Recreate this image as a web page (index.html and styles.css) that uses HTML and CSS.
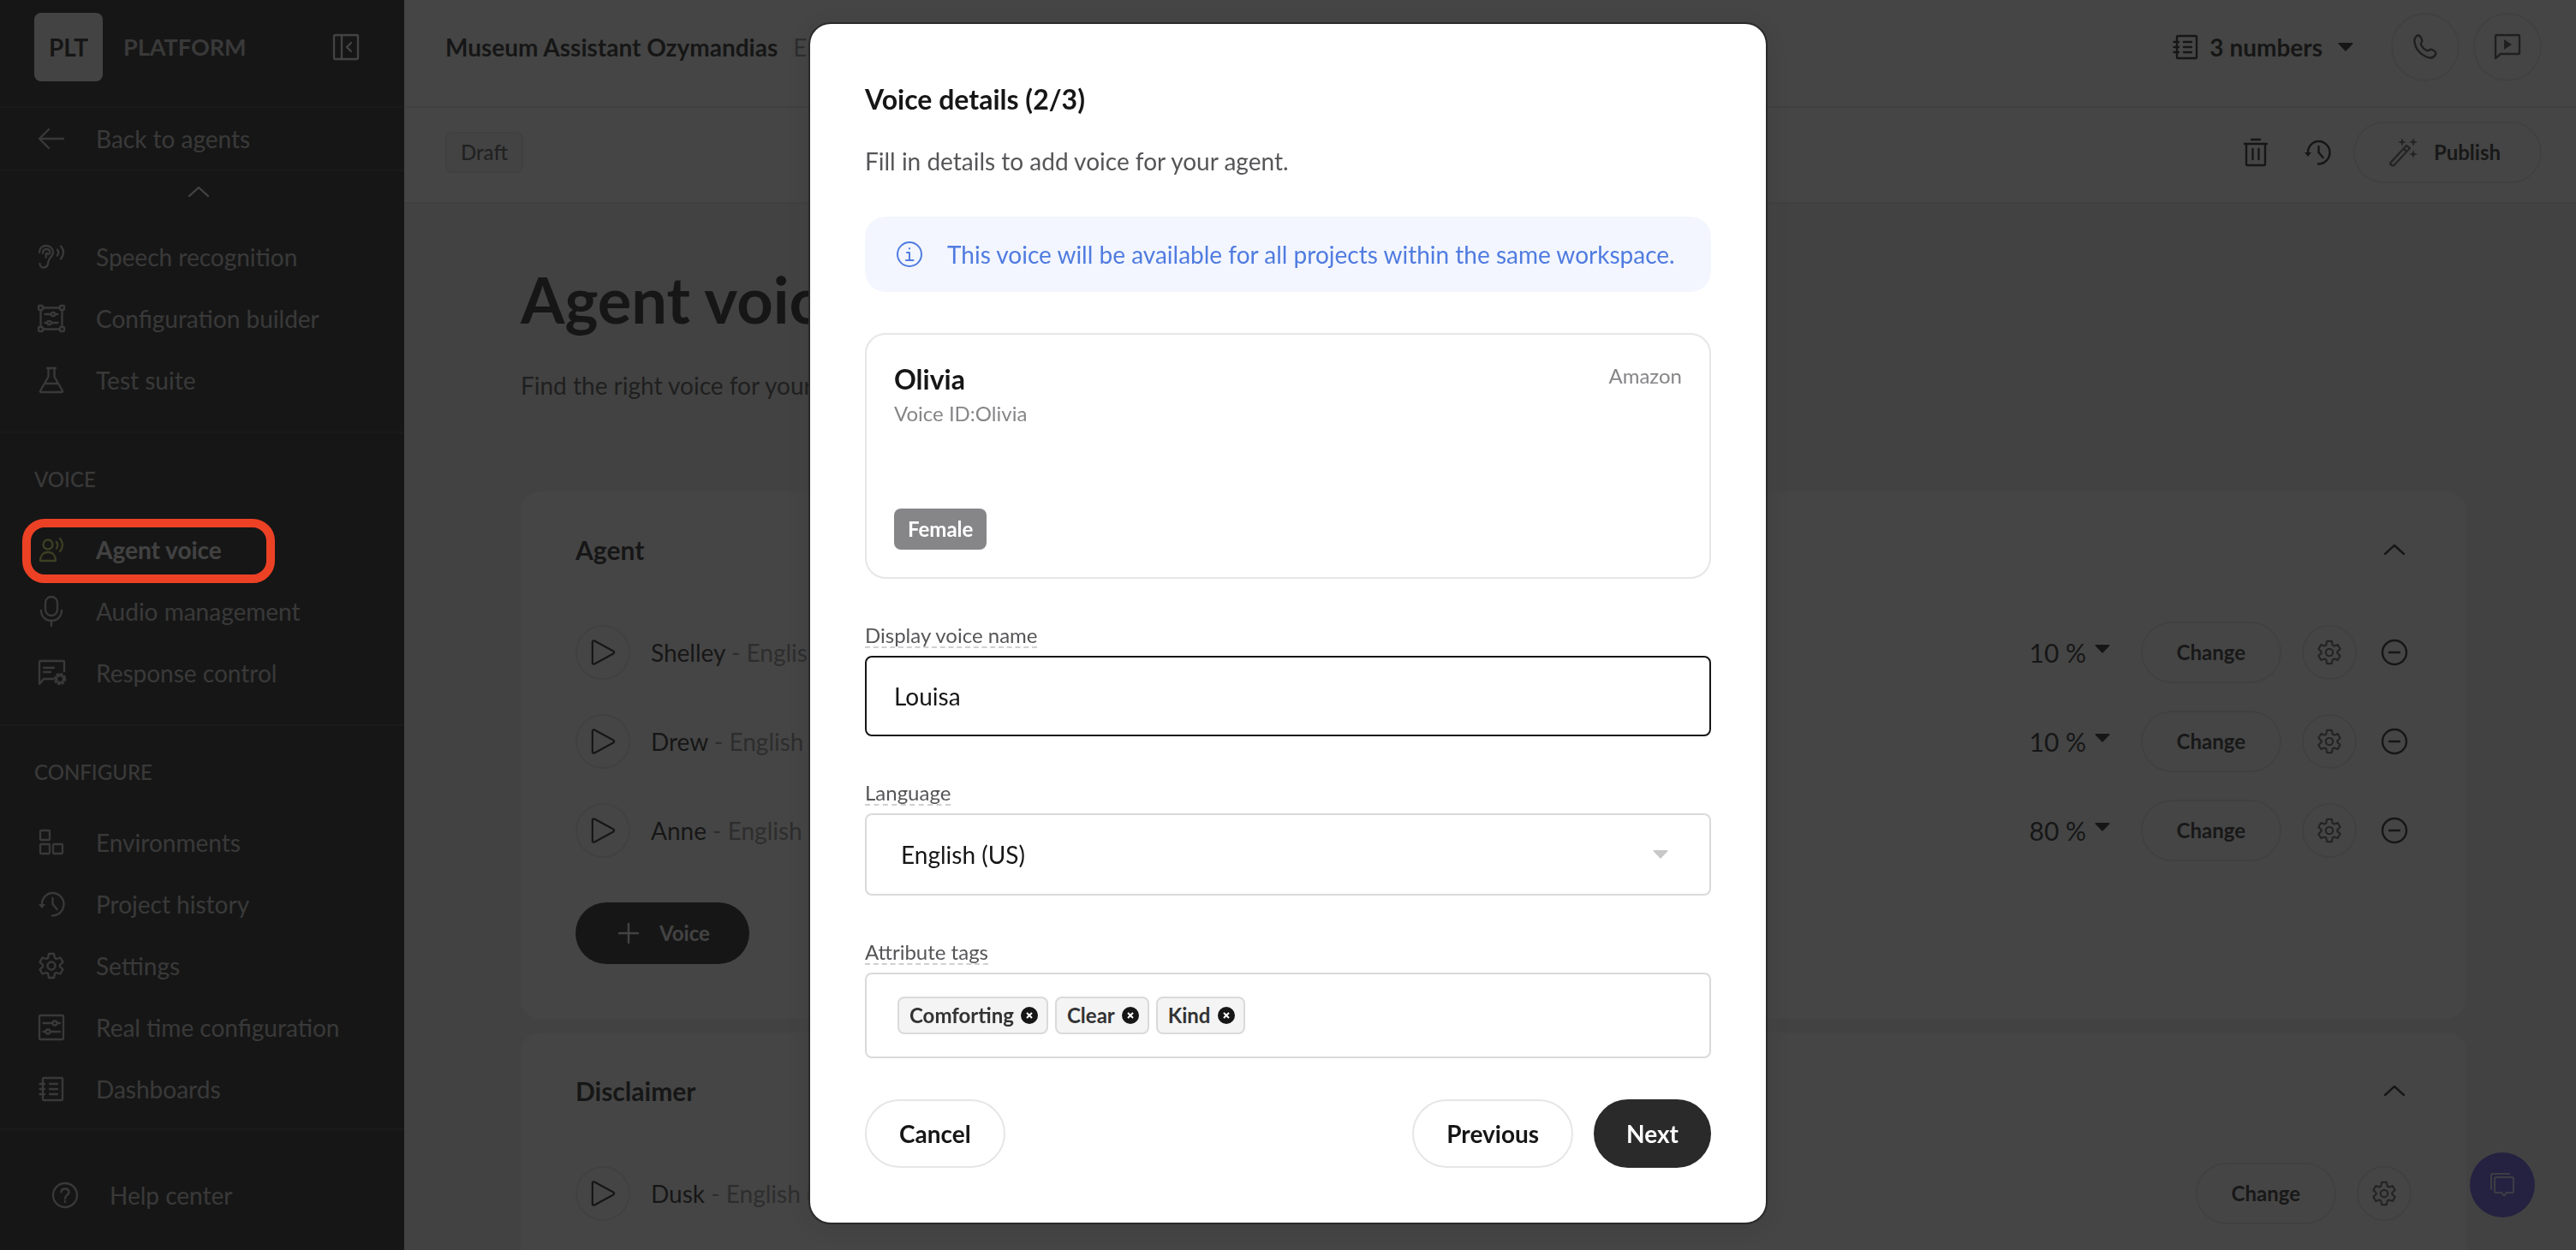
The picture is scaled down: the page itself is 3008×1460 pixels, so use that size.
FILE: index.html
```html
<!DOCTYPE html>
<html lang="en">
<head>
<meta charset="utf-8">
<title>Agent voice</title>
<link rel="stylesheet" href="styles.css">
</head>
<body>
<svg class="sprite" aria-hidden="true">
  <symbol id="i-collapse" viewBox="0 0 32 32"><rect x="2" y="2" width="28" height="28" rx="1"/><path d="M11 2v28M22 11l-5 5 5 5"/></symbol>
  <symbol id="i-back" viewBox="0 0 32 32"><path d="M30 16H2M13 5L2 16l11 11"/></symbol>
  <symbol id="i-up" viewBox="0 0 32 32"><path d="M5 21l11-10 11 10"/></symbol>
  <symbol id="i-ear" viewBox="0 0 32 32"><path d="M2 11C2 6 5.500 3 10 3s8 3.500 8 7.500c0 5-5 6.500-5.500 11-.4 4-2.200 7-5.500 7-2.800 0-4.500-2-4.500-4.500M6 12c0-3 1.500-5 4.200-5s4 1.800 4 4-2 2-3.200 1.400M9.500 16.500c.6-2-.6-3.500 1-5"/><path d="M23 7.500c1.500 2 1.500 4.500 0 7M27 3.500c4 4 4 10.500 0 15"/></symbol>
  <symbol id="i-builder" viewBox="0 0 32 32"><path d="M6.500 4h19M6.500 29h19M4 6.500v19M29 6.500v19M9 11.500h6.500M20.500 11.500H24M9 21.500h2.500M16.500 21.500H24" transform="translate(-.5 -.5)"/><rect x="1" y="1" width="5" height="5" rx="1"/><rect x="26" y="1" width="5" height="5" rx="1"/><rect x="1" y="26" width="5" height="5" rx="1"/><rect x="26" y="26" width="5" height="5" rx="1"/><circle cx="18" cy="11" r="2.200"/><circle cx="13.500" cy="21" r="2.200"/></symbol>
  <symbol id="i-flask" viewBox="0 0 32 32"><path d="M11 2h10M12.500 2v10L3 28.500c-.5 1 0 1.500 1 1.500h24c1 0 1.500-.5 1-1.500L19.500 12V2M8 20h16"/></symbol>
  <symbol id="i-agent" viewBox="0 0 32 32"><circle cx="12" cy="10" r="5.500"/><path d="M3 29c0-6 3.500-10 9-10s9 4 9 10zM22 7c1.600 2.300 1.600 5 0 7.500M26 3c4 4.500 4 10.500 0 15"/></symbol>
  <symbol id="i-mic" viewBox="0 0 32 32"><rect x="9" y="-1" width="14" height="22" rx="7"/><path d="M4 15c0 7 5 12 12 12s12-5 12-12M16 27v6"/></symbol>
  <symbol id="i-response" viewBox="0 0 32 32"><path d="M31 14V3c0-.6-.4-1-1-1H3c-.6 0-1 .4-1 1v26l5-6h11M7 10h12M7 15h8"/><circle cx="26" cy="23" r="4"/><circle cx="26" cy="23" r="6" stroke-dasharray="1.800 2.910"/></symbol>
  <symbol id="i-env" viewBox="0 0 32 32"><rect x="3" y="2" width="11" height="11" rx="1"/><rect x="3" y="18" width="11" height="11" rx="1"/><rect x="18" y="18" width="11" height="11" rx="1"/></symbol>
  <symbol id="i-history" viewBox="0 0 32 32"><path d="M5 17V16C5 9 10.500 3 17.500 3S30.500 9 30.500 16 25 29.500 17 29.500M17.500 9v7l5 6"/><path class="solid" d="M1 16h8l-4 5z"/></symbol>
  <symbol id="i-gear" viewBox="0 0 32 32"><path d="M12 6.900L13 2h6l1 4.900 2 1.100 4.400-1.500 3.100 5.200L26 15v2l3.500 3.300-3.100 5.200L22 24l-2 1.100L19 30h-6l-1-4.900L10 24l-4.400 1.500-3.100-5.200L6 17v-2l-3.500-3.300 3.100-5.200L10 8z"/><circle cx="16" cy="16" r="4.500"/></symbol>
  <symbol id="i-sliders" viewBox="0 0 32 32"><rect x="2" y="2" width="28" height="28" rx="1"/><path d="M6.500 11H17M22.500 11H26M6.500 21H9.500M15 21H26"/><circle cx="20" cy="11" r="2.500"/><circle cx="12" cy="21" r="2.500"/></symbol>
  <symbol id="i-book" viewBox="0 0 32 32"><rect x="6" y="3" width="23" height="26" rx="1"/><path d="M2.500 10H8M2.500 16H8M2.500 22H8M14 10h9M14 16h9M14 22h9"/></symbol>
  <symbol id="i-help" viewBox="0 0 32 32"><circle cx="16" cy="16" r="14"/><path d="M11.500 12.500C11.500 10 13.500 8.500 16 8.500s4.500 1.500 4.500 4c0 3.500-4.500 3-4.500 7.500M16 23v1"/></symbol>
  <symbol id="i-phone" viewBox="0 0 32 32"><path d="M6 3c3-2 4 0 6 4 1.500 3-2 3.500-1 6 1.500 3.500 4 6 7 7 2.500 1 3-2.500 6-1 4 2 5.500 3.500 3.500 6.500-2 3-6 4-11 1.500C9 24 4.500 17 3.500 10.500 3 7 3.500 5 6 3z"/></symbol>
  <symbol id="i-demo" viewBox="0 0 32 32"><path d="M2 29V3c0-.6.4-1 1-1h26c.6 0 1 .4 1 1v20c0 .6-.4 1-1 1H8z"/><path class="solid" d="M12 7l9 6-9 6z"/></symbol>
  <symbol id="i-trash" viewBox="0 0 32 32"><path d="M11 1h10M3 6h26M5 6v24c0 .6.4 1 1 1h20c.6 0 1-.4 1-1V6M12.500 12v12M19.500 12v12"/></symbol>
  <symbol id="i-wand" viewBox="0 0 32 32"><path d="M1.500 28L20 8l4 3L5.500 31C4 32 0 30 1.500 28zM17 12l3.500 3"/><path class="spark" d="M15-1l1.300 3.700L20 4l-3.700 1.300L15 9l-1.300-3.700L10 4l3.700-1.300zM28-1l1.300 3.700L33 4l-3.700 1.300L28 9l-1.300-3.700L23 4l3.700-1.300zM28 13l1.300 3.700L33 18l-3.700 1.300L28 23l-1.300-3.700L23 18l3.700-1.300z"/></symbol>
  <symbol id="i-play" viewBox="0 0 32 32"><path d="M3 3c0-1.500 1.200-2 2.500-1.300L29 14.500c1.400.8 1.400 2.200 0 3L5.500 30.300C4.200 31 3 30.500 3 29z"/></symbol>
  <symbol id="i-plus" viewBox="0 0 32 32"><path d="M16 5v22M5 16h22"/></symbol>
  <symbol id="i-minus" viewBox="0 0 32 32"><circle cx="16" cy="16" r="14"/><path d="M10 16h12"/></symbol>
  <symbol id="i-info" viewBox="0 0 32 32"><circle cx="16" cy="16" r="14"/><path d="M13 14h3v9M12 23h8.500M16 9v.5"/></symbol>
  <symbol id="i-caret" viewBox="0 0 18 10"><path class="solid" d="M1.500 0h15c1 0 1.400.8.7 1.500L9 10 .8 1.500C.1.800.5 0 1.500 0z"/></symbol>
  <symbol id="i-x" viewBox="0 0 20 20"><circle class="solid" cx="10" cy="10" r="10"/><path class="cross" d="M7 7l6 6M13 7l-6 6"/></symbol>
  <symbol id="i-chat" viewBox="0 0 32 32"><path d="M7 8.500C7 7.500 7.500 7 8.500 7h19c1 0 1.500.5 1.500 1.500v15c0 1-.5 1.500-1.500 1.500H21l-3 3.500-3-3.500H8.500C7.500 25 7 24.500 7 23.500z"/><path d="M3 21V4.500C3 3.500 3.500 3 4.500 3H24"/></symbol>
</svg>

<div class="app">
  <aside class="sidebar">
    <div class="brand">
      <span class="brand-mark">PLT</span>
      <span class="brand-name">PLATFORM</span>
      <button class="icon-btn" type="button" aria-label="Collapse sidebar"><svg class="icon light"><use href="#i-collapse"/></svg></button>
    </div>
    <a class="nav-item back" href="#"><svg class="icon"><use href="#i-back"/></svg>Back to agents</a>
    <nav class="nav">
      <button class="nav-scroll" type="button" aria-label="Scroll up"><svg class="icon light"><use href="#i-up"/></svg></button>
      <div class="nav-group">
        <a class="nav-item" href="#"><svg class="icon"><use href="#i-ear"/></svg>Speech recognition</a>
        <a class="nav-item" href="#"><svg class="icon"><use href="#i-builder"/></svg>Configuration builder</a>
        <a class="nav-item" href="#"><svg class="icon"><use href="#i-flask"/></svg>Test suite</a>
      </div>
      <div class="nav-group">
        <h2 class="nav-title">VOICE</h2>
        <a class="nav-item active" href="#" aria-current="page"><svg class="icon"><use href="#i-agent"/></svg>Agent voice</a>
        <a class="nav-item" href="#"><svg class="icon"><use href="#i-mic"/></svg>Audio management</a>
        <a class="nav-item" href="#"><svg class="icon"><use href="#i-response"/></svg>Response control</a>
      </div>
      <div class="nav-group">
        <h2 class="nav-title">CONFIGURE</h2>
        <a class="nav-item" href="#"><svg class="icon"><use href="#i-env"/></svg>Environments</a>
        <a class="nav-item" href="#"><svg class="icon"><use href="#i-history"/></svg>Project history</a>
        <a class="nav-item" href="#"><svg class="icon"><use href="#i-gear"/></svg>Settings</a>
        <a class="nav-item" href="#"><svg class="icon"><use href="#i-sliders"/></svg>Real time configuration</a>
        <a class="nav-item" href="#"><svg class="icon"><use href="#i-book"/></svg>Dashboards</a>
      </div>
    </nav>
    <div class="sidebar-foot">
      <a class="nav-item help" href="#"><svg class="icon"><use href="#i-help"/></svg>Help center</a>
    </div>
  </aside>

  <main class="main">
    <header class="topbar">
      <strong class="agent-name">Museum Assistant Ozymandias</strong>
      <span class="agent-lang">English (US)</span>
      <div class="top-actions">
        <button class="numbers" type="button"><svg class="icon"><use href="#i-book"/></svg>3 numbers<svg class="caret"><use href="#i-caret"/></svg></button>
        <button class="round large" type="button" aria-label="Call"><svg class="icon"><use href="#i-phone"/></svg></button>
        <button class="round large" type="button" aria-label="Demo"><svg class="icon"><use href="#i-demo"/></svg></button>
      </div>
    </header>
    <div class="subbar">
      <span class="draft">Draft</span>
      <div class="sub-actions">
        <div class="tools">
          <button class="icon-btn" type="button" aria-label="Delete"><svg class="icon"><use href="#i-trash"/></svg></button>
          <button class="icon-btn" type="button" aria-label="History"><svg class="icon"><use href="#i-history"/></svg></button>
        </div>
        <button class="pill publish" type="button"><svg class="icon"><use href="#i-wand"/></svg>Publish</button>
      </div>
    </div>
    <div class="content">
      <h1 class="page-title">Agent voice</h1>
      <p class="page-text">Find the right voice for your agent</p>
      <div class="cards">
        <section class="card">
          <div class="card-head"><h2>Agent</h2><button class="icon-btn" type="button" aria-label="Collapse"><svg class="icon"><use href="#i-up"/></svg></button></div>
          <div class="voice-row">
            <button class="round" type="button" aria-label="Play Shelley"><svg class="icon"><use href="#i-play"/></svg></button>
            <p class="voice-name">Shelley <span>- English (US)</span></p>
            <div class="row-actions">
              <div class="percent"><select aria-label="Shelley share"><option>10 %</option></select><svg class="caret"><use href="#i-caret"/></svg></div>
              <button class="pill" type="button">Change</button>
              <button class="round gear" type="button" aria-label="Voice settings"><svg class="icon"><use href="#i-gear"/></svg></button>
              <button class="icon-btn" type="button" aria-label="Remove"><svg class="icon"><use href="#i-minus"/></svg></button>
            </div>
          </div>
          <div class="voice-row">
            <button class="round" type="button" aria-label="Play Drew"><svg class="icon"><use href="#i-play"/></svg></button>
            <p class="voice-name">Drew <span>- English (US)</span></p>
            <div class="row-actions">
              <div class="percent"><select aria-label="Drew share"><option>10 %</option></select><svg class="caret"><use href="#i-caret"/></svg></div>
              <button class="pill" type="button">Change</button>
              <button class="round gear" type="button" aria-label="Voice settings"><svg class="icon"><use href="#i-gear"/></svg></button>
              <button class="icon-btn" type="button" aria-label="Remove"><svg class="icon"><use href="#i-minus"/></svg></button>
            </div>
          </div>
          <div class="voice-row">
            <button class="round" type="button" aria-label="Play Anne"><svg class="icon"><use href="#i-play"/></svg></button>
            <p class="voice-name">Anne <span>- English (US)</span></p>
            <div class="row-actions">
              <div class="percent"><select aria-label="Anne share"><option>80 %</option></select><svg class="caret"><use href="#i-caret"/></svg></div>
              <button class="pill" type="button">Change</button>
              <button class="round gear" type="button" aria-label="Voice settings"><svg class="icon"><use href="#i-gear"/></svg></button>
              <button class="icon-btn" type="button" aria-label="Remove"><svg class="icon"><use href="#i-minus"/></svg></button>
            </div>
          </div>
          <button class="pill add-voice" type="button"><svg class="icon"><use href="#i-plus"/></svg>Voice</button>
        </section>
        <section class="card">
          <div class="card-head"><h2>Disclaimer</h2><button class="icon-btn" type="button" aria-label="Collapse"><svg class="icon"><use href="#i-up"/></svg></button></div>
          <div class="voice-row">
            <button class="round" type="button" aria-label="Play Dusk"><svg class="icon"><use href="#i-play"/></svg></button>
            <p class="voice-name">Dusk <span>- English (US)</span></p>
            <div class="row-actions">
              <button class="pill" type="button">Change</button>
              <button class="round gear" type="button" aria-label="Voice settings"><svg class="icon"><use href="#i-gear"/></svg></button>
            </div>
          </div>
        </section>
      </div>
    </div>
  </main>
</div>

<button class="chat-launcher" type="button" aria-label="Open chat"><svg class="icon"><use href="#i-chat"/></svg></button>

<div class="backdrop">
  <form class="modal" role="dialog" aria-modal="true" aria-labelledby="modal-title">
    <h2 class="modal-title" id="modal-title">Voice details (2/3)</h2>
    <p class="modal-text">Fill in details to add voice for your agent.</p>
    <p class="notice"><svg class="icon"><use href="#i-info"/></svg>This voice will be available for all projects within the same workspace.</p>
    <div class="voice-card">
      <div class="voice-card-head">
        <h3>Olivia</h3>
        <span class="provider">Amazon</span>
      </div>
      <p class="voice-id">Voice ID:Olivia</p>
      <span class="badge">Female</span>
    </div>
    <div class="field">
      <label for="voice-name">Display voice name</label>
      <input class="text-input" id="voice-name" type="text" value="Louisa">
    </div>
    <div class="field">
      <label for="language">Language</label>
      <div class="select-box">
        <select id="language"><option>English (US)</option></select>
        <svg class="caret"><use href="#i-caret"/></svg>
      </div>
    </div>
    <div class="field">
      <label for="tags">Attribute tags</label>
      <div class="tag-box">
        <span class="tag">Comforting<button type="button" aria-label="Remove Comforting"><svg><use href="#i-x"/></svg></button></span>
        <span class="tag">Clear<button type="button" aria-label="Remove Clear"><svg><use href="#i-x"/></svg></button></span>
        <span class="tag">Kind<button type="button" aria-label="Remove Kind"><svg><use href="#i-x"/></svg></button></span>
        <input id="tags" type="text">
      </div>
    </div>
    <div class="modal-actions">
      <button class="btn" type="button">Cancel</button>
      <button class="btn push" type="button">Previous</button>
      <button class="btn primary" type="submit">Next</button>
    </div>
  </form>
</div>
</body>
</html>
```
FILE: styles.css
```css
:root {
  --ink: #161616;
  --line: #e6e6e6;
  --field-line: #dadada;
}

* { box-sizing: border-box; }

body {
  margin: 0;
  overflow: hidden;
  font-family: Lato, "Open Sans", sans-serif;
  font-size: 28px;
  line-height: 40px;
  color: var(--ink);
}

h1, h2, h3, p { margin: 0; }

button, input, select { font: inherit; color: inherit; }

button {
  display: inline-flex;
  align-items: center;
  justify-content: center;
  margin: 0;
  padding: 0;
  border: 0;
  background: none;
  white-space: nowrap;
}

select {
  appearance: none;
  border: 0;
  padding: 0;
  background: none;
}

a { color: inherit; text-decoration: none; }

.sprite { position: absolute; width: 0; height: 0; }

.icon {
  flex: none;
  width: 32px;
  height: 32px;
  overflow: visible;
  fill: none;
  stroke: currentColor;
  stroke-width: 2;
  stroke-linecap: round;
  stroke-linejoin: round;
}

symbol { overflow: visible; }
.solid { fill: currentColor; stroke: none; }
.spark { fill: currentColor; stroke: none; }
.cross { fill: none; stroke: #fff; stroke-width: 2; }
.caret { flex: none; width: 18px; height: 10px; }

.icon-btn { width: 40px; height: 40px; }

.app { display: flex; height: 100vh; }

/* Sidebar */
.sidebar {
  display: flex;
  flex: none;
  flex-direction: column;
  width: 472px;
  background: var(--ink);
  color: #c0c0c0;
}

.sidebar .icon { stroke-width: 2.3; }
.light { color: #f4f4f4; }

.brand {
  display: flex;
  align-items: center;
  gap: 24px;
  padding: 15px 48px 29px 40px;
  border-bottom: 2px solid #2a2a2a;
  font-weight: 700;
}

.brand-mark {
  display: flex;
  align-items: center;
  justify-content: center;
  width: 80px;
  height: 80px;
  border-radius: 8px;
  background: #f4f4f4;
  color: var(--ink);
}

.brand-name { font-size: 27px; }
.brand .icon-btn { margin-left: auto; }

.nav { flex: 1; min-height: 0; overflow: hidden; }

.nav-scroll { width: 100%; height: 64px; padding: 0 8px 16px 0; }

.nav-item {
  position: relative;
  display: flex;
  align-items: center;
  gap: 36px;
  height: 72px;
  padding: 0 44px;
  white-space: nowrap;
}

.back { height: 74px; border-bottom: 2px solid #2a2a2a; }

.nav-group { padding-bottom: 24px; border-bottom: 2px solid #2a2a2a; }
.nav-group:last-child { border-bottom: 0; }

.nav-title {
  padding: 40px 40px 32px;
  font-size: 24px;
  line-height: 28px;
  font-weight: 500;
}

.active { color: #f0f0f0; font-weight: 700; }
.active .icon { color: #d4de58; }

/* Highlight ring stays visible above the backdrop */
.active::before {
  content: "";
  position: absolute;
  z-index: 20;
  inset: 0 151px -3px 26px;
  border: 10px solid #ec4125;
  border-radius: 26px;
}

.sidebar-foot { padding: 40px 0 28px; border-top: 2px solid #2a2a2a; }
.help { padding: 0 60px; }

/* Main area */
.main {
  display: flex;
  flex: 1;
  flex-direction: column;
  min-width: 0;
  background: #f1f1f1;
}

.main .icon { stroke-width: 2.4; }

.topbar, .subbar {
  display: flex;
  flex: none;
  align-items: center;
  padding: 0 40px 0 48px;
  border-bottom: 2px solid var(--line);
  background: #fff;
}

.topbar { gap: 18px; padding-top: 15px; padding-bottom: 29px; }
.agent-name { font-weight: 700; }
.agent-lang { color: #898989; }

.top-actions, .sub-actions {
  display: flex;
  align-items: center;
  gap: 16px;
  margin-left: auto;
}

.numbers { gap: 12px; padding-right: 28px; font-weight: 700; }
.numbers .caret { margin-left: 6px; }

.round {
  flex: none;
  width: 64px;
  height: 64px;
  border: 2px solid var(--line);
  border-radius: 50%;
}

.round .icon { width: 30px; height: 30px; }
.round.large { width: 80px; height: 80px; color: #444; }
.round.large .icon { width: 32px; height: 32px; }
.gear { color: #5c5c5c; }

.subbar { padding-top: 16px; padding-bottom: 22px; }
.sub-actions { gap: 22px; }

.draft {
  padding: 8px 16px;
  border: 2px solid var(--line);
  border-radius: 8px;
  background: #f6f6f6;
  color: #4a4a4a;
  font-size: 24px;
  line-height: 28px;
  font-weight: 500;
}

.tools { display: flex; gap: 32px; }

.pill {
  gap: 20px;
  height: 72px;
  padding: 0 40px;
  border: 2px solid var(--line);
  border-radius: 36px;
  color: #222;
  font-size: 24px;
  font-weight: 700;
}

.publish { padding-right: 46px; }
.publish .icon { color: #5c5c5c; }

.content { padding: 64px 128px 0 136px; }

.page-title { font-size: 74px; line-height: 96px; font-weight: 700; }
.page-text { margin: 32px 0 104px; color: #444; }

.cards { display: grid; gap: 16px; }

.card { padding: 48px 64px 64px; border-radius: 24px; background: #fff; }

.card-head {
  display: flex;
  align-items: center;
  justify-content: space-between;
  margin-bottom: 48px;
}

.card-head h2 { font-size: 30px; line-height: 40px; font-weight: 700; }

.voice-row { display: flex; align-items: center; gap: 24px; height: 104px; }
.voice-name span { color: #898989; }

.row-actions { display: flex; align-items: center; gap: 24px; margin-left: auto; }

.percent { display: flex; align-items: center; gap: 9px; margin-right: 12px; font-size: 30px; }
.percent .caret { margin-bottom: 8px; }

.add-voice { margin-top: 32px; padding: 0 46px; border: 0; background: var(--ink); color: #f4f4f4; }

.chat-launcher {
  position: fixed;
  right: 48px;
  bottom: 38px;
  width: 76px;
  height: 76px;
  border-radius: 50%;
  background: #5c52e3;
  color: #d8d6ff;
}

/* Dialog */
.backdrop {
  position: fixed;
  z-index: 10;
  inset: 0;
  display: flex;
  align-items: flex-start;
  justify-content: center;
  padding: 28px 24px;
  background: rgba(22, 22, 22, 0.8);
}

.modal {
  width: 100%;
  max-width: 1116px;
  padding: 64px;
  border-radius: 24px;
  background: #fff;
  box-shadow: 0 0 0 2px #2a2a2a, 0 4px 24px rgba(22, 22, 22, 0.16);
}

.modal-title { margin-bottom: 28px; font-size: 32px; line-height: 48px; font-weight: 700; }
.modal-text { margin-bottom: 45px; color: #565659; }

.notice {
  display: flex;
  align-items: center;
  gap: 28px;
  height: 88px;
  padding: 0 36px;
  border-radius: 24px;
  background: #f3f6fe;
  color: #507ce0;
  white-space: nowrap;
}

.voice-card {
  display: flex;
  flex-direction: column;
  align-items: flex-start;
  min-height: 287px;
  margin-top: 48px;
  padding: 32px;
  border: 2px solid var(--line);
  border-radius: 24px;
}

.voice-card-head { display: flex; justify-content: space-between; width: 100%; }
.voice-card h3 { font-size: 32px; line-height: 40px; font-weight: 700; }
.provider, .voice-id { color: #868588; font-size: 24px; line-height: 32px; }
.voice-id { margin-top: 4px; }

.badge {
  margin-top: auto;
  padding: 8px 16px;
  border-radius: 8px;
  background: #868588;
  color: #fff;
  font-size: 24px;
  line-height: 32px;
  font-weight: 700;
}

.field { margin-top: 52px; }

.field label {
  display: block;
  width: max-content;
  margin-bottom: 10px;
  color: #565659;
  font-size: 24px;
  line-height: 28px;
  text-decoration: underline dashed 2px #d0d0d0;
  text-underline-offset: 4px;
}

.text-input, .select-box, .tag-box {
  display: flex;
  align-items: center;
  width: 100%;
  border: 2px solid var(--field-line);
  border-radius: 8px;
  background: #fff;
}

.text-input { height: 94px; padding: 0 32px; border-color: var(--ink); outline: 0; }

.select-box { height: 96px; padding: 0 48px 0 40px; }
.select-box select { flex: 1; height: 100%; }
.select-box .caret { color: #c8c8c8; }

.tag-box { gap: 8px; height: 100px; padding: 0 36px; }
.tag-box input { flex: 1; min-width: 0; border: 0; padding: 0; outline: 0; }

.tag {
  display: flex;
  align-items: center;
  gap: 8px;
  height: 44px;
  padding: 0 10px 0 12px;
  border: 2px solid var(--field-line);
  border-radius: 8px;
  background: #f4f4f4;
  color: #333;
  font-size: 24px;
  font-weight: 700;
}

.tag svg { width: 20px; height: 20px; color: var(--ink); }

.modal-actions { display: flex; gap: 24px; margin-top: 48px; }

.btn {
  height: 80px;
  padding: 0 38px;
  border: 2px solid var(--line);
  border-radius: 40px;
  font-weight: 700;
}

.push { margin-left: auto; }
.primary { padding: 0 36px; border-color: #2a2a2a; background: #2a2a2a; color: #fff; }
```
